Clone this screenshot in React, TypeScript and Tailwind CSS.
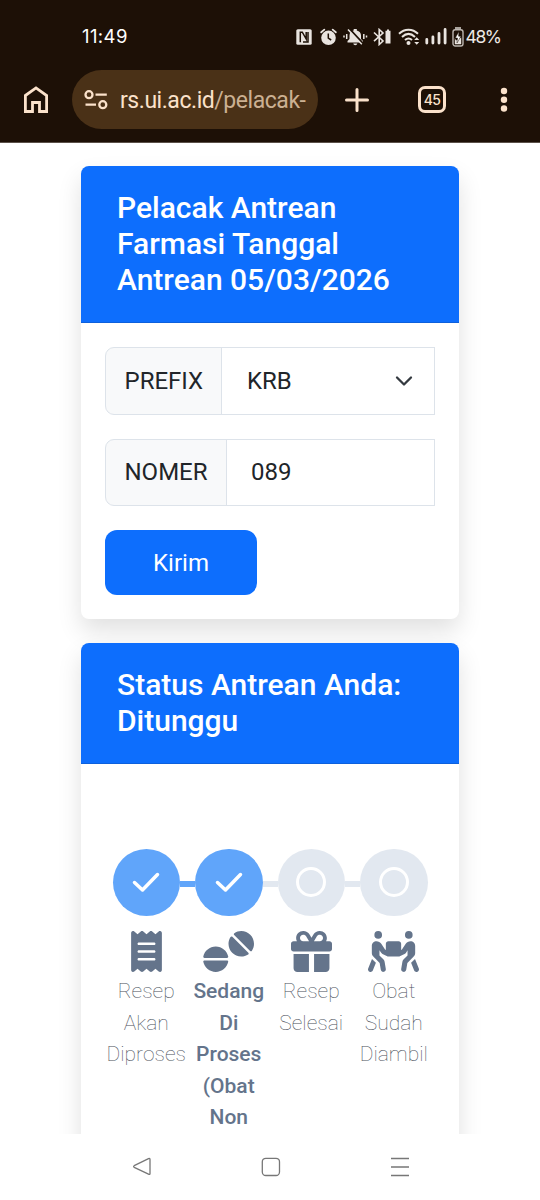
import React from "react";
import { FaReceipt, FaTablets, FaGift, FaPeopleCarryBox } from "react-icons/fa6";

function StatusBar() {
  return (
    <div className="flex h-[60px] items-start pl-[82px] pt-[24px] font-['Inter'] text-[#eee9e4]">
      <span className="w-[214px] font-['Inter'] text-[18.500px] font-normal leading-6 tracking-[0.4px] text-white">11:49</span>
      <div className="flex h-[25px] items-center">
        <svg width="16" height="16" viewBox="0 0 16 16" className="shrink-0">
          <rect x="0.3" y="0.3" width="15.4" height="15.4" rx="1.500" fill="#e9e4df" />
          <path d="M4.300 13.300V3.200H6.300L10.200 10V3M7 12.900H12V3" fill="none" stroke="#1d1006" strokeWidth="1.500" />
          <path d="M6 6V12.500" stroke="#e9e4df" strokeWidth="1" />
        </svg>
        <svg width="17" height="18" viewBox="0 0 17 18" className="ml-[7.500px] shrink-0">
          <circle cx="8.500" cy="9.800" r="7.300" fill="#e9e4df" />
          <path d="M1.200 4.300 4.300 1.600M15.800 4.300 12.700 1.600" stroke="#e9e4df" strokeWidth="1.800" strokeLinecap="round" />
          <path d="M8.300 5.500V10.200L11.200 12" fill="none" stroke="#1d1006" strokeWidth="1.500" />
        </svg>
        <svg width="25" height="18" viewBox="0 0 25 18" className="ml-[6px] shrink-0">
          <path d="M4.500 14.500V13L6.500 11V7.500C6.500 4.700 8.300 3 10.700 2.500V1H13.800V2.500C16.500 3.200 18 5 18 7.500V11L20 13V14.500ZM10.300 15.500H14.300C14 17.800 10.600 17.800 10.300 15.500Z" fill="#e9e4df" />
          <path d="M6.500 1 20 15.500" stroke="#1d1006" strokeWidth="2" />
          <path d="M5 1.500 18.800 16.300" stroke="#e9e4df" strokeWidth="1.500" />
          <path d="M1 7.500V9.500M3.700 6V11M20.800 6V11M23.500 7.500V9.500" stroke="#e9e4df" strokeWidth="1.500" />
        </svg>
        <svg width="18" height="18" viewBox="0 0 18 18" className="ml-[5px] shrink-0">
          <path d="M1 4.500 10 13 6.200 16.500V1.500L10 5 1 13.200" fill="none" stroke="#e9e4df" strokeWidth="1.600" />
          <path d="M12.500 4V2.800H14V1.500H16V2.800H17.500V15.500H12.500Z" fill="#e9e4df" />
        </svg>
        <svg width="23" height="18" viewBox="0 0 23 18" className="ml-[7px] shrink-0">
          <g fill="none" stroke="#e9e4df" strokeWidth="2">
            <path d="M1 5.800C6.500.3 14.500.3 20 5.800" />
            <path d="M4 9C8.300 4.900 12.700 4.900 17 9" />
            <path d="M7 12.100C9.300 10 11.700 10 14 12.100" />
          </g>
          <circle cx="10.500" cy="15" r="2" fill="#e9e4df" />
          <path d="M16.200 12 18.700 9.200 21.200 12ZM16.200 14 18.700 16.800 21.200 14Z" fill="#e9e4df" />
        </svg>
        <svg width="22" height="17" viewBox="0 0 22 17" className="ml-[4px] shrink-0">
          <path d="M1.800 11.500V15M7.900 9V15M14 5.500V15M20.100 1.500V15" stroke="#e9e4df" strokeWidth="2.800" strokeLinecap="round" />
        </svg>
        <svg width="12" height="20" viewBox="0 0 12 20" className="ml-[5px] shrink-0">
          <path d="M3 1H9" stroke="#a9a39c" strokeWidth="2" />
          <rect x="1" y="2.800" width="10" height="16.200" rx="2.200" fill="none" stroke="#bcb6b0" strokeWidth="1.400" />
          <path d="M2.800 11 4 13.500 6 12.500 9.200 10.500V17.200H2.800Z" fill="#e9e4df" />
          <path d="M7 4.500 3.200 11H5.500L5 16 9 9.200H6.600Z" fill="#fff" stroke="#1d1006" strokeWidth=".5" />
        </svg>
        <span className="ml-[2px] whitespace-nowrap pt-px text-[17.500px] font-normal leading-6 tracking-[-1.400px]">48%</span>
      </div>
    </div>
  );
}

function BrowserBar() {
  return (
    <div className="flex h-[82px] items-start pl-[24px] pt-[10px] text-[#fbe2cb]">
      <svg width="24" height="27" viewBox="0 0 24 27" className="mt-[16px]" fill="none" stroke="currentColor" strokeWidth="2.800">
        <path d="M1.400 9.500 12 1.900 22.600 9.500V25.500H15.500V16.500H8.500V25.500H1.400Z" />
      </svg>
      <div className="ml-[24px] flex h-[59px] w-[246px] items-center rounded-full bg-[#4a3117] pl-[12px]">
        <svg width="24" height="20" viewBox="0 0 24 20" className="shrink-0" fill="none" stroke="currentColor" strokeWidth="2.300">
          <circle cx="5" cy="4.700" r="3.500" />
          <path d="M11.500 4.700H22.800M1.500 14.700H12" />
          <circle cx="18.800" cy="14.700" r="3.500" />
        </svg>
        <span className="ml-[12px] mt-[2px] whitespace-nowrap font-['Roboto'] text-[23px] font-normal leading-8 tracking-[-0.45px]">
          rs.ui.ac.id<span className="text-[#cbb092]">/pelacak-</span>
        </span>
      </div>
      <svg width="24" height="24" viewBox="0 0 24 24" className="ml-[27px] mt-[17.500px]" fill="none" stroke="currentColor" strokeWidth="3" strokeLinecap="round">
        <path d="M12 1.500V22.500M1.500 12H22.500" />
      </svg>
      <div className="ml-[49px] mt-[16px] flex h-[27px] w-[28px] items-center justify-center rounded-[7px] border-[3px] border-[#fbe2cb] font-['Inter'] text-[14px] font-medium leading-none tracking-[-0.6px]">
        45
      </div>
      <svg width="8" height="26" viewBox="0 0 8 26" className="ml-[54px] mt-[17px]" fill="currentColor">
        <circle cx="4" cy="4" r="3.200" />
        <circle cx="4" cy="12.700" r="3.200" />
        <circle cx="4" cy="21.500" r="3.200" />
      </svg>
    </div>
  );
}

function CardTitle({ children }: { children: React.ReactNode }) {
  return (
    <div className="border-b-[1.500px] border-[#0d60dc] bg-[#0d6efd] px-[36px] pb-[24px] pt-[24px]">
      <h2 className="text-[30px] font-medium leading-[36px] text-white">{children}</h2>
    </div>
  );
}

const cardShadow = "shadow-[0_12px_24px_rgba(0,0,0,0.12)]";

const steps = [
  { lines: ["Resep", "Akan", "Diproses"], Icon: FaReceipt, size: "h-[41px] w-[31px]", done: true, current: false },
  { lines: ["Sedang", "Di", "Proses", "(Obat", "Non"], Icon: FaTablets, size: "h-[41px] w-[51px]", done: true, current: true },
  { lines: ["Resep", "Selesai"], Icon: FaGift, size: "h-[41px] w-[41px]", done: false, current: false },
  { lines: ["Obat", "Sudah", "Diambil"], Icon: FaPeopleCarryBox, size: "h-[41px] w-[51px]", done: false, current: false },
];

export default function App() {
  return (
    <div className="flex h-[1200px] w-[540px] flex-col overflow-hidden bg-white font-['Roboto',sans-serif]">
      <header className="h-[143px] shrink-0 border-b border-[#5b5149] bg-[#1d1006]">
        <StatusBar />
        <BrowserBar />
      </header>

      <main className="h-[991px] shrink-0 overflow-hidden px-[81px] pt-[23px] text-[#212529]">
        <section className={`h-[453px] overflow-hidden rounded-[8px] bg-white ${cardShadow}`}>
          <CardTitle>
            Pelacak Antrean
            <br />
            Farmasi Tanggal
            <br />
            Antrean 05/03/2026
          </CardTitle>
          <div className="flex flex-col items-start px-[24px] pt-[24px] text-[24px]">
            <div className="flex h-[68px] w-[330px]">
              <span className="flex w-[117px] items-center rounded-l-[9px] border-[1.500px] border-[#dde3ea] bg-[#f8f9fa] pl-[18.500px]">PREFIX</span>
              <div className="-ml-px flex flex-1 items-center justify-between border border-[#dde3ea] pl-[25px] pr-[21.500px]">
                <span>KRB</span>
                <svg width="18" height="12" viewBox="0 0 18 12" fill="none" stroke="#343a40" strokeWidth="2.300" strokeLinecap="round" strokeLinejoin="round">
                  <path d="M2 2.500 9 9.500 16 2.500" />
                </svg>
              </div>
            </div>
            <div className="mt-[24px] flex h-[67px] w-[330px]">
              <span className="flex w-[122px] items-center rounded-l-[9px] border-[1.500px] border-[#dde3ea] bg-[#f8f9fa] pb-px pl-[18.500px]">NOMER</span>
              <div className="-ml-px flex flex-1 items-center border border-[#dde3ea] pb-px pl-[24px]">089</div>
            </div>
            <button className="mt-[24px] h-[65px] w-[152px] rounded-[12px] bg-[#0d6efd] text-white">Kirim</button>
          </div>
        </section>

        <section className={`mt-[24px] h-[600px] overflow-hidden rounded-t-[8px] bg-white ${cardShadow}`}>
          <CardTitle>
            Status Antrean Anda:
            <br />
            Ditunggu
          </CardTitle>
          <ol className="flex px-[24px] pt-[84.500px]">
            {steps.map(({ lines, Icon, size, done, current }, i) => (
              <li key={i} className="flex w-[82.500px] shrink-0 flex-col items-center">
                <div className="flex w-full items-center">
                  <span className={`mt-[4px] h-[6px] flex-1 ${i === 0 ? "bg-transparent" : done ? "bg-[#60a5fa]" : "bg-[#e2e8f0]"}`} />
                  <span className={`flex size-[67.500px] items-center justify-center rounded-full ${done ? "bg-[#60a5fa]" : "bg-[#e2e8f0]"}`}>
                    {done ? (
                      <svg width="30" height="24" viewBox="0 0 30 24" fill="none" stroke="white" strokeWidth="3.500" strokeLinecap="round" strokeLinejoin="round">
                        <path d="M3.500 12.500 11.500 20 26.500 4.500" />
                      </svg>
                    ) : (
                      <span className="size-[30px] rounded-full border-[3px] border-white" />
                    )}
                  </span>
                  <span className={`mt-[4px] h-[6px] flex-1 ${i === 3 ? "bg-transparent" : steps[i + 1].done ? "bg-[#60a5fa]" : "bg-[#e2e8f0]"}`} />
                </div>
                <Icon className={`mt-[15px] text-[#64748b] ${size}`} />
                <div className={`mt-[4px] text-center text-[21px] leading-[31.500px] ${current ? "font-medium text-[#64748b]" : "font-thin text-[#4a505a]"}`}>
                  {lines.map((line) => (
                    <div key={line} className="whitespace-nowrap">{line}</div>
                  ))}
                </div>
              </li>
            ))}
          </ol>
        </section>
      </main>

      <nav className="flex h-[66px] shrink-0 items-center bg-white pl-[132px]">
        <svg width="20" height="20" viewBox="0 0 20 20" fill="none" stroke="#777" strokeWidth="1.300" strokeLinejoin="round">
          <path d="M16.500 1.700Q18 1 18 2.600V16.400Q18 18 16.500 17.200L2.200 10.300Q1 9.500 2.200 8.700Z" />
        </svg>
        <svg width="20" height="20" viewBox="0 0 20 20" className="ml-[109px]" fill="none" stroke="#777" strokeWidth="1.300">
          <rect x="1.300" y="1.300" width="17.200" height="17.200" rx="3.500" />
        </svg>
        <svg width="20" height="20" viewBox="0 0 20 20" className="ml-[109px]" fill="none" stroke="#777" strokeWidth="1.400">
          <path d="M1 1.500H19M1 10H19M1 18.500H19" />
        </svg>
      </nav>
    </div>
  );
}
